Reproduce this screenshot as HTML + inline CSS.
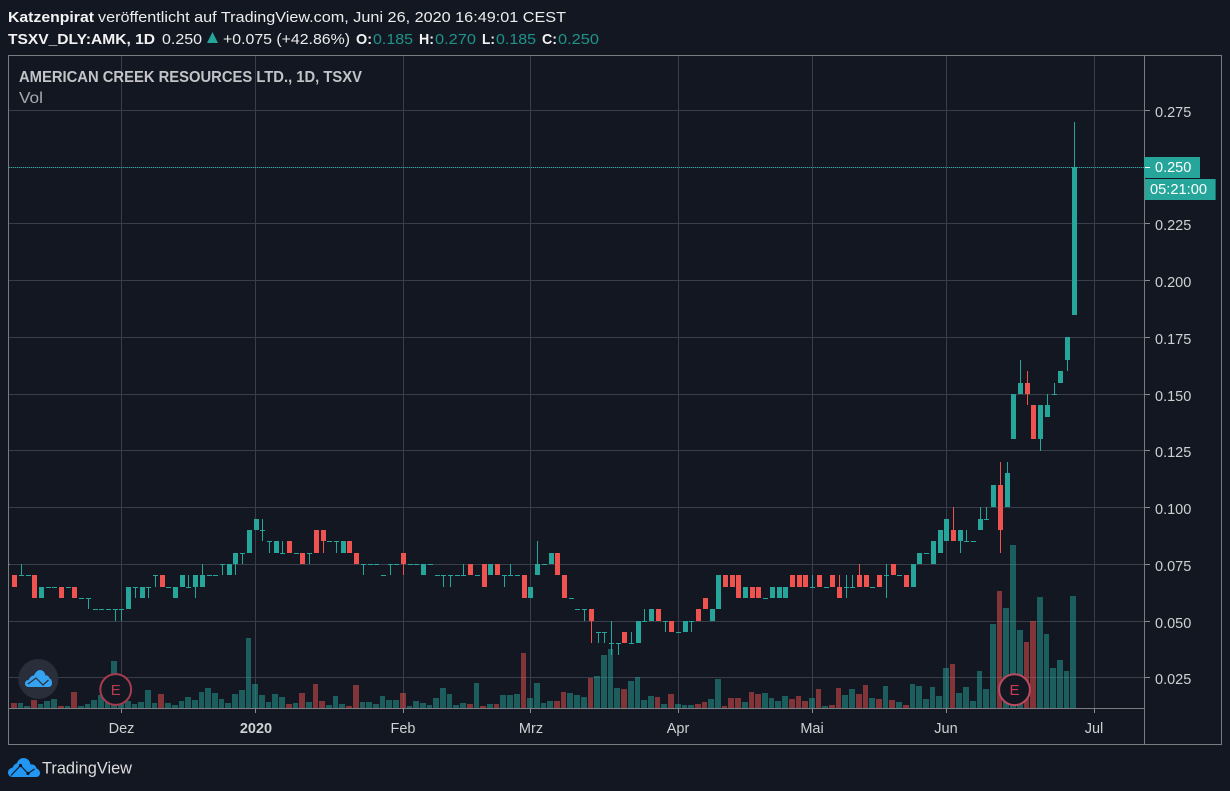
<!DOCTYPE html>
<html><head><meta charset="utf-8"><title>TSXV_DLY:AMK</title>
<style>
html,body{margin:0;padding:0;background:#131722;width:1230px;height:791px;overflow:hidden}
svg{display:block;font-family:"Liberation Sans",sans-serif}
.p{font-size:14.5px;fill:#cfd0d2}
.x{font-size:14.5px;fill:#cfd0d2;text-anchor:middle}
.h{font-size:15px;fill:#ececec}
.b{font-weight:bold;fill:#f2f2f2}
.t{font-size:15px;fill:#1f9389}
</style></head><body>
<svg xmlns="http://www.w3.org/2000/svg" width="1230" height="791" viewBox="0 0 1230 791">
<rect width="1230" height="791" fill="#131722"/>
<g id="grid" shape-rendering="crispEdges"></g>
<g id="vol" shape-rendering="crispEdges"></g>
<g id="can" shape-rendering="crispEdges"></g>
<g shape-rendering="crispEdges">
<line x1="9" y1="167.5" x2="1144" y2="167.5" stroke="#26a69a" stroke-width="1" stroke-dasharray="1 1"/>
<rect x="8" y="55" width="1214" height="1" fill="#7b7c7f"/>
<rect x="8" y="744" width="1214" height="1" fill="#7b7c7f"/>
<rect x="8" y="55" width="1" height="690" fill="#7b7c7f"/>
<rect x="1144" y="55" width="1" height="690" fill="#7b7c7f"/>
<rect x="1221" y="55" width="1" height="690" fill="#7b7c7f"/>
<rect x="8" y="708" width="1137" height="1" fill="#7b7c7f"/>
</g>
<g id="ticks" shape-rendering="crispEdges"></g>

<!-- header -->
<text x="8" y="22" class="h b" textLength="86" lengthAdjust="spacingAndGlyphs">Katzenpirat</text>
<text x="98" y="22" class="h" textLength="468" lengthAdjust="spacingAndGlyphs">veröffentlicht auf TradingView.com, Juni 26, 2020 16:49:01 CEST</text>
<text x="8" y="44" class="h b" textLength="147" lengthAdjust="spacingAndGlyphs">TSXV_DLY:AMK, 1D</text>
<text x="162" y="44" class="h" textLength="40" lengthAdjust="spacingAndGlyphs">0.250</text>
<path d="M212.5 32L218 43H207Z" fill="#26a69a"/>
<text x="223" y="44" class="h" textLength="127" lengthAdjust="spacingAndGlyphs">+0.075 (+42.86%)</text>
<text x="356" y="44" class="h b" textLength="16" lengthAdjust="spacingAndGlyphs">O:</text><text x="373" y="44" class="t" textLength="40" lengthAdjust="spacingAndGlyphs">0.185</text>
<text x="419" y="44" class="h b" textLength="15" lengthAdjust="spacingAndGlyphs">H:</text><text x="435" y="44" class="t" textLength="41" lengthAdjust="spacingAndGlyphs">0.270</text>
<text x="482" y="44" class="h b" textLength="13" lengthAdjust="spacingAndGlyphs">L:</text><text x="496" y="44" class="t" textLength="40" lengthAdjust="spacingAndGlyphs">0.185</text>
<text x="542" y="44" class="h b" textLength="15" lengthAdjust="spacingAndGlyphs">C:</text><text x="558" y="44" class="t" textLength="41" lengthAdjust="spacingAndGlyphs">0.250</text>

<text x="19" y="82" font-size="16" font-weight="bold" fill="#c2c4c8" textLength="343" lengthAdjust="spacingAndGlyphs">AMERICAN CREEK RESOURCES LTD., 1D, TSXV</text>
<text x="19" y="103" font-size="16" fill="#a8aaae" textLength="24" lengthAdjust="spacingAndGlyphs">Vol</text>

<!-- price axis -->
<text x="1155" y="117" class="p">0.275</text>
<text x="1155" y="230" class="p">0.225</text>
<text x="1155" y="287" class="p">0.200</text>
<text x="1155" y="344" class="p">0.175</text>
<text x="1155" y="401" class="p">0.150</text>
<text x="1155" y="457" class="p">0.125</text>
<text x="1155" y="514" class="p">0.100</text>
<text x="1155" y="571" class="p">0.075</text>
<text x="1155" y="628" class="p">0.050</text>
<text x="1155" y="684" class="p">0.025</text>

<g shape-rendering="crispEdges">
<rect x="1144" y="157" width="56" height="21" fill="#26a69a"/>
<rect x="1145" y="167" width="5" height="1" fill="#ffffff"/>
<rect x="1145" y="179" width="71" height="21" fill="#26a69a"/>
<rect x="1215" y="179" width="1" height="21" fill="#1c6f6b"/>
</g>
<text x="1155" y="172" font-size="14.5" fill="#ffffff">0.250</text>
<text x="1150" y="194" font-size="14.5" fill="#ffffff" textLength="57" lengthAdjust="spacingAndGlyphs">05:21:00</text>

<!-- time axis -->
<text x="121.5" y="733" class="x">Dez</text>
<text x="256" y="733" class="x" font-weight="bold">2020</text>
<text x="403" y="733" class="x">Feb</text>
<text x="531" y="733" class="x">Mrz</text>
<text x="678" y="733" class="x">Apr</text>
<text x="812" y="733" class="x">Mai</text>
<text x="946" y="733" class="x">Jun</text>
<text x="1094" y="733" class="x">Jul</text>

<!-- E badges -->
<circle cx="115.7" cy="689.5" r="15.4" fill="#131722" stroke="#a63c4e" stroke-width="2"/>
<text x="115.7" y="695" font-size="15" fill="#b83a50" text-anchor="middle">E</text>
<circle cx="1014.5" cy="689.7" r="15.4" fill="#131722" stroke="#bd4a60" stroke-width="2"/>
<text x="1014.5" y="695.2" font-size="15" fill="#cc3a52" text-anchor="middle">E</text>

<!-- floating logo -->
<circle cx="38.3" cy="679" r="20" fill="#2a2e3b"/>
<g transform="translate(25,670)">
<path d="M3.5 17C1.5 17 0 15.5 0 13.5C0 11.5 1.5 10 3.5 10C5 7 7 5.5 9 5.5C10 3 12 0 15 0C18 0 20 2.5 20.5 5.5C23 5 24 7 24.5 8.5C26.5 9 27 11 27 13C27 15.5 25.5 17 23.5 17Z" fill="#36a2f2"/>
<path d="M3 14L11 8L18 15L23.5 10" fill="none" stroke="#2a2e3b" stroke-width="1.2"/>
</g>

<!-- footer logo -->
<path d="M12.5 777C10 777 8 775 8 772.5C8 770 10 768 12.5 767.8C13.5 765 15.5 763.5 17 763.2C18 760 20.5 758 23.5 758C27 758 30 760.5 30.5 764.5C33.5 764 36 765.5 36.5 768.5C38.500 769 40 771 40 773C40 775.5 38.5 777 36 777Z" fill="#2196f3"/>
<path d="M11 775.5L20.5 765.5L28 773.5L34.5 769" fill="none" stroke="#131722" stroke-width="1.2"/>
<circle cx="20.5" cy="765.5" r="1.600" fill="#131722"/>
<circle cx="28" cy="773.5" r="1.600" fill="#131722"/>
<text x="42" y="773.5" font-size="17" fill="#dcdcdc" textLength="90" lengthAdjust="spacingAndGlyphs">TradingView</text>
</svg>
<script>
(function(){
var NS='http://www.w3.org/2000/svg';
function R(g,x,y,w,h,f){var r=document.createElementNS(NS,'rect');r.setAttribute('x',x);r.setAttribute('y',y);r.setAttribute('width',w);r.setAttribute('height',h);r.setAttribute('fill',f);g.appendChild(r);}
var G=document.getElementById('grid'),V=document.getElementById('vol'),K=document.getElementById('can'),T=document.getElementById('ticks');
var gc='#3a3e4b';
[110,167,223,280,337,394,450,507,564,621,677].forEach(function(y){R(G,9,y,1135,1,gc);R(T,1145,y,5,1,'#8a8c90');});
[121,255,403,530,678,812,946,1094].forEach(function(x){R(G,x,56,1,652,gc);R(T,x,709,1,4,'#8a8c90');});
var C=[[14,13],[14,14,15],[14,14],[14,12],[12,13],[13,13],[13,13],[13,12],[13,13],[13,12],[12,12],[12,12,12,11],[11,11],[11,11],[11,11],[11,11,11,10],[11,11,11,10],[11,13],[13,13,13,12],[12,13],[13,13,13,12],[14,14,14,13],[14,13],[13,13],[12,13],[13,14],[13,13,14],[13,14,14,12],[13,14,15],[14,14],[14,14],[15,15,15,14],[14,15],[15,16,16,14],[16,16,16,15],[16,18],[18,19],[18,18,19,17],[17,17,17,16],[16,17],[16,16,17],[17,16],[16,16],[16,15],[16,16,16,15],[18,16],[18,17,18,16],[17,17],[17,17,17,16],[16,17],[17,16],[16,15],[15,15,15,14],[15,15],[15,15],[14,14],[15,15,15,14],[15,15],[16,15,16,14],[15,15],[15,15],[14,15],[15,15],[14,14],[14,14,14,13],[14,14,14,13],[14,14],[14,14,15],[15,14],[14,14],[15,13],[14,15],[15,14],[14,14,14,13],[14,14,15],[14,14],[14,12],[12,13],[14,15,17],[15,15],[15,16],[16,14],[14,12],[12,12],[11,11],[11,11,11,10],[11,10,11,8],[9,9,9,8],[9,9,9,8],[8,8,10,7],[8,8,8,7],[9,8],[8,8,9],[8,10],[10,10,11],[10,11],[11,10],[10,10,10,9],[10,9],[9,9],[9,10],[10,10,10,9],[11,10],[12,11],[10,11],[11,14],[14,13],[14,13],[14,12],[12,13],[13,12],[13,12],[12,12],[12,13],[12,13],[12,13],[14,13],[14,13],[14,13],[13,13,14],[14,13],[13,13],[14,13],[13,12,14],[13,13,14,12],[13,13,14],[14,13,15],[14,13],[13,13],[14,13],[14,14,15,12],[15,14],[14,14],[14,13],[13,15],[15,16],[16,16],[15,17],[16,18],[17,19],[18,17,20],[17,18,18,16],[17,17,18],[17,17],[18,19,20],[19,19,20],[20,22],[22,18,24,16],[20,23,24],[26,30],[30,31,33],[31,30,32,29],[29,26],[26,29,29,25],[28,29,30],[30,30,31],[31,32],[33,35,35,32],[37,50,54]];
var VH=[5,5,1.5,8,4,7,9,2,2,16,2,4,8,13,7,47,8,7,4,6,18,5,14,5,3,7,11,8,16,20,15,9,5,14,18,70,24,13,6,14,11,4,5,15,6,24,7,3,12,4,2,23,6,6,4,12,8,8,15,2,7,5,3,10,20,14,3,5,4,25,2,4,4,13,13,14,55,10,25,5,7,7,16,15,13,11,30,32,53,59,20,19,27,31,8,12,11,4,14,4,3,3,4,6,9,29,2,10,10,6,16,14,15,10,7,12,9,12,7,10,19,2,3,20,13,19,14,23,10,9,22,8,6,3,24,22,9,21,12,40,44,15,21,7,37,19,84,117,100,163,78,66,87,111,74,40,48,37,112];
var VR={};[0,3,7,9,22,41,43,45,46,50,51,58,68,70,72,76,81,82,86,91,96,98,102,103,106,107,108,110,111,116,117,118,120,122,123,126,127,129,131,133,140,147,151,152].forEach(function(i){VR[i]=1;});
function X(i){return 14.6+6.706*i;}
function Y(t){return 110.5+(55-t)*11.34;}
var TE='#26a69a',RE='#ef5350';
R(K,9,564,1,1,TE);
C.forEach(function(c,i){
 var o=c[0],e=c[1],h=c[2]===undefined?Math.max(o,e):c[2],l=c[3]===undefined?Math.min(o,e):c[3];
 var col=e<o?RE:TE,left=Math.round(X(i)-2.5),top=Math.round(Y(Math.max(o,e))),bot=Math.round(Y(Math.min(o,e)));
 var ht=Math.round(Y(h)),lw=Math.round(Y(l));
 if(lw>ht)R(K,left+2,ht,1,lw-ht,col);
 if(bot-top<1)R(K,left,top,5,1,col);else R(K,left,top,5,bot-top,col);
});
function L(i){return Math.round(X(i)-3.7);}
VH.forEach(function(h,i){
 var x=L(i),w=L(i+1)-x-1,hh=Math.round(h);
 R(V,x,708-hh,w,hh,VR[i]?'rgba(239,83,80,.5)':'rgba(38,166,154,.5)');
});
})();
</script>
</body></html>
